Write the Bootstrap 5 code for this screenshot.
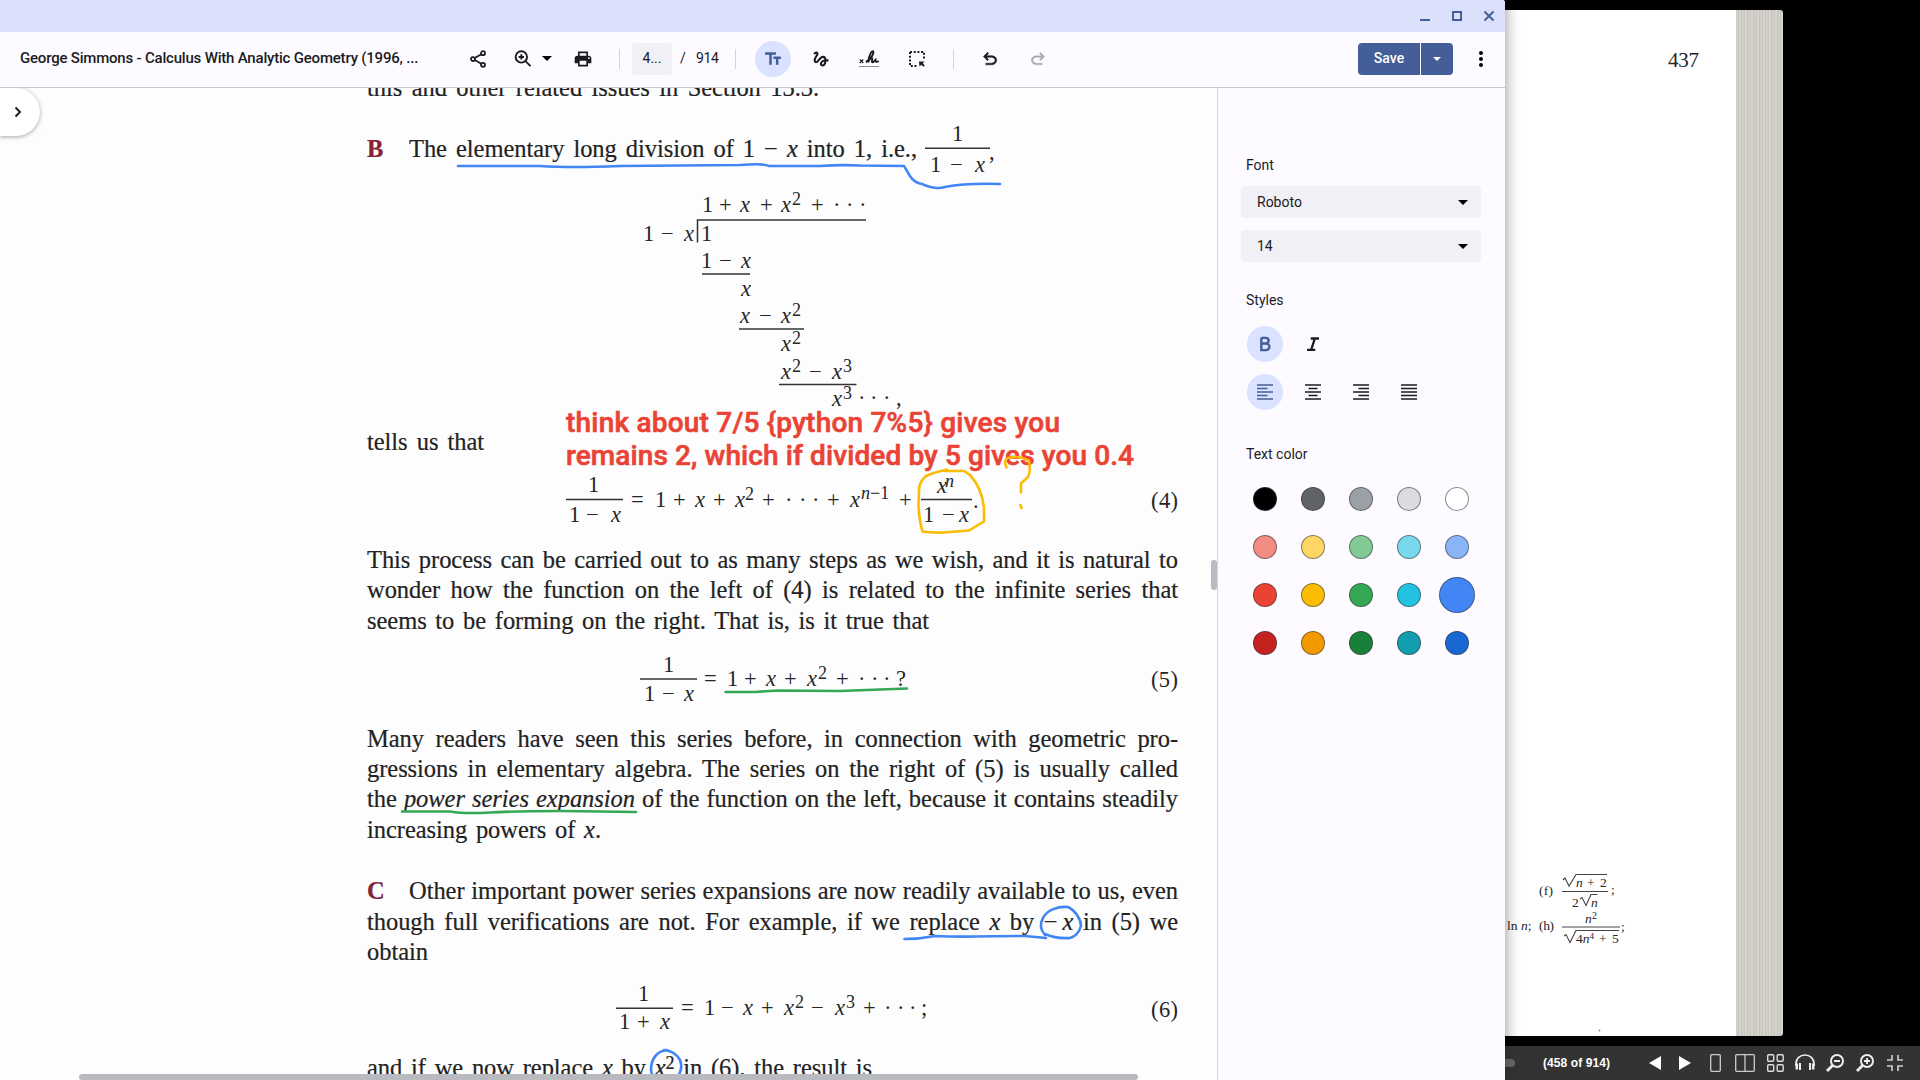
<!DOCTYPE html>
<html lang="en">
<head>
<meta charset="utf-8">
<title>George Simmons - Calculus With Analytic Geometry</title>
<link href="https://cdn.jsdelivr.net/npm/bootstrap@5.3.0/dist/css/bootstrap.min.css" rel="stylesheet">
<style>
body{width:1920px;height:1080px;overflow:hidden;background:#000;font-family:Roboto,"Liberation Sans",sans-serif;color:#1b1b1f}
svg{display:block;flex:none;overflow:visible}
.app-window{width:1505px;height:1080px;background:#fdfbff;box-shadow:0 0 12px rgba(0,0,0,.32);z-index:2;border-top-right-radius:3px}
.title-strip{height:32px;background:#dce1fb;color:#445e99;border-top-right-radius:3px;padding-right:11px;gap:22px}
.tool-strip{height:56px;border-bottom:1px solid #c9c9d0;padding-bottom:2px}
.doc-name{width:418px;padding-left:20px;font-size:15px;font-weight:500;letter-spacing:-.2px;white-space:nowrap}
.tool{width:36px;height:36px;border-radius:50%;display:flex;align-items:center;justify-content:center;flex:none}
.tool.on{background:#d9e2ff;color:#445e99}
.rule-v{width:1px;height:20px;background:#d3d3d9;flex:none}
.page-box{width:40px;height:32px;border-radius:4px;background:#f0f0f6;font-size:14px}
.save-btn{height:32px;background:#445e99;color:#fff;font-size:14px;font-weight:500;border-radius:4px 0 0 4px;width:62px}
.save-more{height:32px;width:32px;margin-left:1px;background:#445e99;color:#fff;border-radius:0 4px 4px 0}
.viewer{width:1217px;height:992px;background:#fdfdfd;overflow:hidden}
.sheet{margin-left:367px;width:811px;margin-top:-15.3px;font-family:"Liberation Serif",serif;color:#222;font-size:24.5px}
.sheet svg,.overlay-ink,.book-math{font-family:"Liberation Serif",serif;fill:#262626}
.ln{height:30.33px;line-height:30.33px;white-space:nowrap;text-align:justify;text-align-last:justify;letter-spacing:-.05px;word-spacing:-4px;-webkit-text-stroke:.2px #222}
.mark-letter{display:inline-block;width:42px;color:#8c2036;font-weight:700;text-align-last:left}
.math{font-size:22.5px}
.math i,.math .v{font-style:italic}
.math .s{font-size:18px}
.r{stroke:#333;stroke-width:1.5;fill:none}
.overlay-ink{position:absolute;left:0;top:0;pointer-events:none}
.overlay-ink path{fill:none;stroke-width:2.6;stroke-linecap:round;stroke-linejoin:round}
.note{font-family:Roboto,sans-serif;font-weight:500;font-size:28px;fill:#ea4335;stroke:#ea4335;stroke-width:.6}
.expander{position:absolute;left:0;top:0;width:40px;height:48px;border-radius:0 24px 24px 0;background:#fff;box-shadow:0 1px 4px rgba(0,0,0,.35)}
.thumb-h{position:absolute;left:79px;top:986px;width:1059px;height:6px;border-radius:3px;background:#b9b9c0}
.thumb-v{position:absolute;left:1211px;top:472px;width:6px;height:30px;border-radius:3px;background:#bbbbc3}
.side{width:288px;border-left:1px solid #d5d5db;padding:67px 23px 0;font-size:14px}
.lab{height:20px;line-height:20px;padding-left:5px}
.pick{height:32px;width:240px;background:#f0f0f6;border-radius:4px;padding:0 13px 0 16px}
.tools{gap:12px;padding-left:6px}
.swatches{display:grid;grid-template-columns:repeat(5,36px);grid-auto-rows:36px;gap:12px;padding-left:6px;place-items:center}
.sw{width:24px;height:24px;border-radius:50%;border:1px solid rgba(60,64,67,.6);background:var(--c)}
.sw.big{width:36px;height:36px}
.backdrop{width:415px;background:#000}
.book{height:1026px;margin-top:10px}
.leaf{width:231px;background:linear-gradient(90deg,#ececec,#fff 16px)}
.leaf-edges{width:47px;border-radius:0 3px 3px 0;background:repeating-linear-gradient(90deg,#d2cfca 0 2px,#c9c6c0 2px 3px,#d8d5d0 3px 5px,#c5c2bc 5px 6px)}
.book-math{font-size:13.5px}
.bar{height:34px;margin-top:10px;background:#333;color:#fff;font:700 12px "Liberation Sans",sans-serif}
.knob{width:10px;height:8px;border-radius:0 4px 4px 0;background:#666}
</style>
<script src="https://cdn.jsdelivr.net/npm/bootstrap@5.3.0/dist/js/bootstrap.bundle.min.js"></script>
</head>
<body class="d-flex">
<main class="app-window d-flex flex-column position-relative flex-shrink-0">
  <header class="title-strip d-flex align-items-center justify-content-end">
    <svg width="10" height="10" stroke="currentColor" stroke-width="2"><path d="M0 9H10"/></svg>
    <svg width="10" height="10" stroke="currentColor" stroke-width="2" fill="none"><path d="M1 1H9V9H1Z"/></svg>
    <svg width="10" height="10" stroke="currentColor" stroke-width="2"><path d="M.5 .5L9.5 9.5M9.5 .5L.5 9.5"/></svg>
  </header>
  <nav class="tool-strip d-flex align-items-center flex-shrink-0">
    <div class="doc-name">George Simmons - Calculus With Analytic Geometry (1996, ...</div>
    <div class="tool" style="margin-left:42px"><svg width="20" height="20" viewBox="0 0 24 24" fill="none" stroke="currentColor" stroke-width="2.1"><circle cx="18" cy="5" r="2.4"/><circle cx="6" cy="12" r="2.4"/><circle cx="18" cy="19" r="2.4"/><path d="M8 10.8L16 6.2M8 13.2L16 17.8"/></svg></div>
    <div class="tool" style="margin-left:9px"><svg width="20" height="20" viewBox="0 0 24 24" fill="none" stroke="currentColor" stroke-width="2.3"><circle cx="10" cy="9.5" r="6.8"/><path d="M15 14.5L21 20.5M10 6.3V12.7M6.8 9.500H13.200"/></svg></div>
    <svg style="margin-left:1px" width="10" height="5"><path d="M0 0H10L5 5Z"/></svg>
    <div class="tool" style="margin-left:13px"><svg width="20" height="20" viewBox="0 0 24 24" fill="currentColor"><path fill-rule="evenodd" d="M19 8H5c-1.7 0-3 1.3-3 3v6h4v4h12v-4h4v-6c0-1.700-1.300-3-3-3zm-3 11H8v-5h8v5zm3-7a1 1 0 1 1 0-2 1 1 0 0 1 0 2zM6 3h12v5H6zM8 5v3h8V5z"/></svg></div>
    <div class="rule-v" style="margin-left:18px"></div>
    <div class="page-box d-flex align-items-center justify-content-center" style="margin-left:12px">4...</div>
    <div style="margin-left:8px;width:12px;font-size:14px">/</div>
    <div style="margin-left:4px;width:24px;font-size:14px;letter-spacing:-.4px">914</div>
    <div class="rule-v" style="margin-left:15px"></div>
    <div class="tool on" style="margin-left:19px"><svg width="20" height="20" viewBox="0 0 24 24" fill="currentColor"><path d="M2.500 4v3h5v12h3V7h5V4h-13zm19 5h-9v3h3v7h3v-7h3V9z"/></svg></div>
    <div class="tool" style="margin-left:12px"><svg width="20" height="20" viewBox="0 0 24 24" fill="currentColor"><path d="M4.590 6.890c.7-.71 1.400-1.350 1.710-1.220.5.2 0 1.030-.3 1.520-.25.42-2.860 3.890-2.860 6.310 0 1.280.48 2.340 1.340 2.980.75.56 1.740.73 2.640.46 1.070-.31 1.950-1.400 3.060-2.770 1.210-1.490 2.830-3.440 4.080-3.440 1.630 0 1.650 1.010 1.760 1.790-3.780.64-5.380 3.670-5.380 5.370 0 1.700 1.440 3.090 3.210 3.090 1.630 0 4.290-1.330 4.690-6.100H21v-2.500h-2.470c-.15-1.650-1.090-4.200-4.030-4.200-2.250 0-4.180 1.910-4.940 2.840-.58.73-2.060 2.480-2.290 2.720-.25.3-.68.84-1.110.84-.45 0-.72-.83-.36-1.920.35-1.090 1.400-2.860 1.850-3.520.78-1.140 1.300-1.920 1.300-3.280C8.950 3.690 7.310 3 6.440 3 5.120 3 3.970 4 3.720 4.250c-.36.36-.66.66-.88.93l1.750 1.710zm9.290 11.660c-.31 0-.74-.26-.74-.72 0-.6.73-2.200 2.870-2.760-.3 2.690-1.430 3.480-2.130 3.480z"/></svg></div>
    <div class="tool" style="margin-left:12px"><svg width="20" height="20" fill="none" stroke="currentColor"><path d="M.8 10.500l3.500 3.500M4.300 10.500L.8 14" stroke-width="1.100"/><path d="M6.800 13C10.500 11.500 15 5.500 14.300 2.700C13.400.8 9.800 5.500 9.200 13.300C10.500 9.500 13 8.300 13.300 9.600C13.600 11 12 13 13.500 13.200C15 13.300 15.600 11.500 16.500 10.800C16.300 13 17.500 13.500 19.700 12" stroke-width="1.900"/><path d="M.5 17.500H20" stroke-dasharray="1 1" stroke-width="1.200"/></svg></div>
    <div class="tool" style="margin-left:12px"><svg width="16" height="16" fill="none" stroke="currentColor"><path d="M1 1H15V9M1 1V15H8" stroke-width="2" stroke-dasharray="2 1.700"/><path d="M10 10.500H15.500L13.800 12.200L15.700 14.400L14.400 15.700L12.300 13.700L10.500 15.500Z" fill="currentColor" stroke="none"/></svg></div>
    <div class="rule-v" style="margin-left:18px"></div>
    <div class="tool" style="margin-left:18px"><svg width="20" height="20" viewBox="0 -960 960 960" fill="currentColor" stroke="currentColor" stroke-width="24"><path d="M280-200v-80h284q63 0 109.500-40T720-420q0-60-46.500-100T564-560H312l104 104-56 56-200-200 200-200 56 56-104 104h252q97 0 169.500 63T800-420q0 94-72.500 157T564-200H280Z"/></svg></div>
    <div class="tool" style="margin-left:12px;color:#a9a9ad"><svg width="20" height="20" viewBox="0 -960 960 960" fill="currentColor" stroke="currentColor" stroke-width="14"><path transform="matrix(-1 0 0 1 960 0)" d="M280-200v-80h284q63 0 109.500-40T720-420q0-60-46.500-100T564-560H312l104 104-56 56-200-200 200-200 56 56-104 104h252q97 0 169.500 63T800-420q0 94-72.500 157T564-200H280Z"/></svg></div>
    <div class="ms-auto save-btn d-flex align-items-center justify-content-center">Save</div>
    <div class="save-more d-flex align-items-center justify-content-center"><svg width="8" height="4" fill="#fff"><path d="M0 0H8L4 4Z"/></svg></div>
    <div class="tool" style="margin:0 6px 0 10px"><svg width="4" height="16"><circle cx="2" cy="2" r="2"/><circle cx="2" cy="8" r="2"/><circle cx="2" cy="14" r="2"/></svg></div>
  </nav>
  <div class="d-flex flex-grow-1">
    <section class="viewer position-relative flex-shrink-0">
      <article class="sheet">
        <div class="ln" style="width:452px">this and other related issues in Section 13.3.</div>
        <div class="d-flex" style="margin-top:31.200px">
          <div class="ln" style="width:550px"><span class="mark-letter">B</span>The elementary long division of 1 − <i>x</i> into 1, i.e.,</div>
          <svg class="math" style="margin-left:8px" width="70" height="30" viewBox="925 134.200 70 30"><text x="952" y="141">1</text><path class="r" d="M925 148.500H990"/><text y="172.500"><tspan x="930">1</tspan><tspan x="950">−</tspan><tspan class="v" x="975">x</tspan></text><text x="989" y="159">,</text></svg>
        </div>
        <svg class="math" width="811" height="262.200" viewBox="367 164.500 811 262.200">
          <text y="212"><tspan x="702">1</tspan><tspan x="719">+</tspan><tspan class="v" x="740">x</tspan><tspan x="760">+</tspan><tspan class="v" x="781">x</tspan><tspan class="s" x="792" dy="-7">2</tspan><tspan x="811" dy="7">+</tspan><tspan x="833">·</tspan><tspan x="846">·</tspan><tspan x="859">·</tspan></text>
          <path class="r" d="M697.500 242V219.500H866"/>
          <text y="240.500"><tspan x="643">1</tspan><tspan x="661">−</tspan><tspan class="v" x="684">x</tspan><tspan x="701">1</tspan></text>
          <text y="267.500"><tspan x="701">1</tspan><tspan x="719">−</tspan><tspan class="v" x="741">x</tspan></text>
          <path class="r" d="M702 273.500H750"/>
          <text y="295.500" x="741" class="v">x</text>
          <text y="323"><tspan class="v" x="740">x</tspan><tspan x="759">−</tspan><tspan class="v" x="781">x</tspan><tspan class="s" x="792" dy="-7">2</tspan></text>
          <path class="r" d="M739 328.500H804"/>
          <text y="351"><tspan class="v" x="781">x</tspan><tspan class="s" x="792" dy="-7">2</tspan></text>
          <text y="378.500"><tspan class="v" x="781">x</tspan><tspan class="s" x="792" dy="-7">2</tspan><tspan x="809" dy="7">−</tspan><tspan class="v" x="832">x</tspan><tspan class="s" x="843" dy="-7">3</tspan></text>
          <path class="r" d="M779 384H856.500"/>
          <text y="405.500"><tspan class="v" x="832">x</tspan><tspan class="s" x="843" dy="-7">3</tspan><tspan x="858" dy="6">·</tspan><tspan x="870">·</tspan><tspan x="883">·</tspan><tspan x="896">,</tspan></text>
        </svg>
        <div class="ln" style="width:117px">tells us that</div>
        <svg class="math" width="811" height="88" viewBox="367 457 811 88">
          <text x="588" y="491.500">1</text><path class="r" d="M566 499.500H623"/>
          <text y="522"><tspan x="569">1</tspan><tspan x="586">−</tspan><tspan class="v" x="611">x</tspan></text>
          <text y="506.500"><tspan x="631">=</tspan><tspan x="655">1</tspan><tspan x="673">+</tspan><tspan class="v" x="695">x</tspan><tspan x="713">+</tspan><tspan class="v" x="735">x</tspan><tspan class="s" x="745" dy="-7">2</tspan><tspan x="762" dy="7">+</tspan><tspan x="785">·</tspan><tspan x="799">·</tspan><tspan x="812">·</tspan><tspan x="827">+</tspan><tspan class="v" x="850">x</tspan><tspan class="s v" x="861" dy="-8">n</tspan><tspan class="s">−1</tspan><tspan x="899" dy="8">+</tspan></text>
          <text y="492.500"><tspan class="v" x="937">x</tspan><tspan class="s v" x="945" dy="-6">n</tspan></text><path class="r" d="M921 499.500H972"/>
          <text y="522"><tspan x="923">1</tspan><tspan x="942">−</tspan><tspan class="v" x="959">x</tspan><tspan x="973" dy="-14">.</tspan></text>
          <text x="1151" y="508" textLength="27">(4)</text>
        </svg>
        <div class="ln">This process can be carried out to as many steps as we wish, and it is natural to</div>
        <div class="ln">wonder how the function on the left of (4) is related to the infinite series that</div>
        <div class="ln" style="width:562px">seems to be forming on the right. That is, is it true that</div>
        <svg class="math" width="811" height="87.700" viewBox="367 636 811 87.700">
          <text x="663" y="672.500">1</text><path class="r" d="M640 679H697"/>
          <text y="701"><tspan x="644">1</tspan><tspan x="662">−</tspan><tspan class="v" x="684">x</tspan></text>
          <text y="686"><tspan x="704">=</tspan><tspan x="727">1</tspan><tspan x="744">+</tspan><tspan class="v" x="766">x</tspan><tspan x="784">+</tspan><tspan class="v" x="807">x</tspan><tspan class="s" x="818" dy="-7">2</tspan><tspan x="836" dy="7">+</tspan><tspan x="858">·</tspan><tspan x="871">·</tspan><tspan x="883">·</tspan><tspan x="896">?</tspan></text>
          <text x="1151" y="687.500" textLength="27">(5)</text>
        </svg>
        <div class="ln">Many readers have seen this series before, in connection with geometric pro-</div>
        <div class="ln">gressions in elementary algebra. The series on the right of (5) is usually called</div>
        <div class="ln">the <i>power series expansion</i> of the function on the left, because it contains steadily</div>
        <div class="ln" style="width:234px">increasing powers of <i>x</i>.</div>
        <div class="ln" style="margin-top:31.200px"><span class="mark-letter">C</span>Other important power series expansions are now readily available to us, even</div>
        <div class="ln">though full verifications are not. For example, if we replace <i>x</i> by <span style="letter-spacing:5px">−</span><i>x</i> in (5) we</div>
        <div class="ln" style="width:62px">obtain</div>
        <svg class="math" width="811" height="86" viewBox="367 967.700 811 86">
          <text x="638" y="1001.500">1</text><path class="r" d="M616 1009H673"/>
          <text y="1029.500"><tspan x="619">1</tspan><tspan x="637">+</tspan><tspan class="v" x="660">x</tspan></text>
          <text y="1016"><tspan x="681">=</tspan><tspan x="704">1</tspan><tspan x="721">−</tspan><tspan class="v" x="743">x</tspan><tspan x="761">+</tspan><tspan class="v" x="784">x</tspan><tspan class="s" x="795" dy="-7">2</tspan><tspan x="811" dy="7">−</tspan><tspan class="v" x="835">x</tspan><tspan class="s" x="846" dy="-7">3</tspan><tspan x="863" dy="7">+</tspan><tspan x="884">·</tspan><tspan x="897">·</tspan><tspan x="909">·</tspan><tspan x="921">;</tspan></text>
          <text x="1151" y="1017.500" textLength="27">(6)</text>
        </svg>
        <div class="ln" style="width:505px">and if we now replace <i>x</i> by <i>x</i><span style="font-size:18px;position:relative;top:-7px">2</span> in (6), the result is</div>
      </article>
      <svg class="overlay-ink" width="1217" height="992" viewBox="0 88 1217 992">
        <text class="note" x="566" y="432" textLength="494">think about 7/5 {python 7%5} gives you</text>
        <text class="note" x="566" y="465" textLength="568">remains 2, which if divided by 5 gives you 0.4</text>
        <g stroke="#4285f4">
          <path d="M458 166H540Q570 168 620 166L740 165Q764 163 769 166H820Q840 164.500 860 165.500L904 166C908 171 910 182 922 184Q935 190 945 187Q965 183 1000 184"/>
          <path d="M904.500 939Q920 939 935 936Q955 937 975 936.500T1025 936L1046 938"/>
          <path d="M1045 935Q1038 927 1043 918C1047 910 1058 906 1068 907C1076 911 1081 920 1081 926Q1078 936 1070 938Q1056 939 1045 934"/>
          <path d="M667 1050C656 1051 651 1060 651 1070Q652 1079 658 1083M675 1080Q684 1070 680 1060Q675 1051 664 1050"/>
        </g>
        <g stroke="#34a853">
          <path d="M725.500 692H755L778 690.500L840 691L880 689.500L907 688.500"/>
          <path d="M402 811.500H450Q465 814 490 812.500T560 811L600 811.500L636 812"/>
        </g>
        <g stroke="#fbbc04">
          <path d="M947 469.500Q932 473 926 476Q919 482 919 490L918.500 505Q919 520 922.500 531.500Q935 533.500 950 532L969 530.500L984 521.500V508Q982 488 970 475L964 471L945 471"/>
          <path d="M1006.500 467.500Q1003 461 1008 458Q1020 455 1029 461Q1031 471 1028 477L1021 483.500V492.500M1020.500 505L1021.500 508"/>
        </g>
      </svg>
      <div class="thumb-h"></div>
      <div class="thumb-v"></div>
      <div class="expander"><svg width="40" height="48" fill="none" stroke="#1b1b1f" stroke-width="1.900"><path d="M15.500 19.500L20 24L15.500 28.500"/></svg></div>
    </section>
    <aside class="side flex-shrink-0">
      <div class="lab">Font</div>
      <div class="pick d-flex align-items-center justify-content-between" style="margin-top:11px">Roboto<svg width="10" height="5"><path d="M0 0H10L5 5Z"/></svg></div>
      <div class="pick d-flex align-items-center justify-content-between" style="margin-top:12px">14<svg width="10" height="5"><path d="M0 0H10L5 5Z"/></svg></div>
      <div class="lab" style="margin-top:28px">Styles</div>
      <div class="tools d-flex" style="margin-top:16px">
        <div class="tool on"><svg width="22" height="22" viewBox="0 0 24 24" fill="none" stroke="currentColor" stroke-width="2.600"><path d="M8 5.300V18.700H13.200A3.600 3.600 0 0 0 13.200 11.500H8M12.800 11.500A3.100 3.100 0 0 0 12.800 5.300H8"/></svg></div>
        <div class="tool"><svg width="22" height="22" viewBox="0 0 24 24" fill="none" stroke="currentColor" stroke-width="2.500"><path d="M9.500 6H18.500M5.500 18.500H14.500M14 6L10 18.500" /></svg></div>
      </div>
      <div class="tools d-flex" style="margin-top:12px">
        <div class="tool on"><svg width="16" height="16" stroke="currentColor" stroke-width="1.400"><path d="M0 1H16M0 4.500H10.500M0 8H16M0 11.500H10.500M0 15H16"/></svg></div>
        <div class="tool"><svg width="16" height="16" stroke="currentColor" stroke-width="1.700"><path d="M0 1H16M3.500 4.500H12.500M0 8H16M3.500 11.500H12.500M0 15H16"/></svg></div>
        <div class="tool"><svg width="16" height="16" stroke="currentColor" stroke-width="1.700"><path d="M0 1H16M5.500 4.500H16M0 8H16M5.500 11.500H16M0 15H16"/></svg></div>
        <div class="tool"><svg width="16" height="16" stroke="currentColor" stroke-width="1.700"><path d="M0 1H16M0 4.500H16M0 8H16M0 11.500H16M0 15H16"/></svg></div>
      </div>
      <div class="lab" style="margin-top:34px">Text color</div>
      <div class="swatches" style="margin-top:17px">
        <div class="sw" style="--c:#000"></div><div class="sw" style="--c:#5f6368"></div><div class="sw" style="--c:#9aa0a6"></div><div class="sw" style="--c:#dadce0"></div><div class="sw" style="--c:#fff"></div>
        <div class="sw" style="--c:#f28b82"></div><div class="sw" style="--c:#fdd663"></div><div class="sw" style="--c:#81c995"></div><div class="sw" style="--c:#78d9ec"></div><div class="sw" style="--c:#8ab4f8"></div>
        <div class="sw" style="--c:#ea4335"></div><div class="sw" style="--c:#fbbc04"></div><div class="sw" style="--c:#34a853"></div><div class="sw" style="--c:#24c1e0"></div><div class="sw big" style="--c:#4285f4"></div>
        <div class="sw" style="--c:#c5221f"></div><div class="sw" style="--c:#f29900"></div><div class="sw" style="--c:#188038"></div><div class="sw" style="--c:#129eaf"></div><div class="sw" style="--c:#1967d2"></div>
      </div>
    </aside>
  </div>
</main>
<section class="backdrop flex-shrink-0">
  <div class="book d-flex">
    <div class="leaf">
      <svg class="book-math" width="231" height="1026" viewBox="1505 10 231 1026">
        <text x="1668" y="67" font-size="21" textLength="31">437</text>
        <text x="1539" y="895" textLength="14">(f)</text>
        <path d="M1563 880l2-2 4 8 7-11.500H1607M1562 891.500H1608M1580 899l2-1.500 4 8 5-11H1597.500" fill="none" stroke="#444" stroke-width="1.100"/>
        <text y="887"><tspan x="1576" font-style="italic">n</tspan><tspan x="1587">+</tspan><tspan x="1600">2</tspan></text>
        <text y="907"><tspan x="1572">2</tspan><tspan x="1591" font-style="italic">n</tspan></text>
        <text x="1611" y="894">;</text>
        <text x="1507" y="930">ln <tspan font-style="italic">n</tspan>;</text>
        <text x="1539" y="930" textLength="15">(h)</text>
        <text y="923"><tspan x="1585" font-style="italic">n</tspan><tspan x="1592" dy="-4" font-size="10">2</tspan></text>
        <path d="M1562 927H1620M1564 936l2-1.500 4 8 6-12H1619" fill="none" stroke="#444" stroke-width="1.100"/>
        <text y="943"><tspan x="1576">4</tspan><tspan font-style="italic">n</tspan><tspan dy="-4" font-size="9">4</tspan><tspan x="1599" dy="4">+</tspan><tspan x="1612">5</tspan></text>
        <text x="1621" y="931">;</text>
        <circle cx="1599.500" cy="1030.500" r=".9" fill="#888"/>
      </svg>
    </div>
    <div class="leaf-edges"></div>
  </div>
  <footer class="bar d-flex align-items-center">
    <div class="knob"></div>
    <div style="margin-left:28px;width:96px;letter-spacing:.08px">(458 of 914)</div>
    <svg style="margin-left:10px" width="12" height="14" fill="#fff"><path d="M12 0V14L0 7Z"/></svg>
    <svg style="margin-left:18px" width="12" height="14" fill="#fff"><path d="M0 0V14L12 7Z"/></svg>
    <svg style="margin-left:19px" width="11" height="18" fill="none" stroke="#ccc" stroke-width="1.300"><rect x=".7" y=".7" width="9.600" height="16.600" rx="1"/></svg>
    <svg style="margin-left:14px" width="20" height="18" fill="none" stroke="#ccc" stroke-width="1.300"><rect x=".7" y=".7" width="18.600" height="16.600" rx="1"/><path d="M10 1V17"/></svg>
    <svg style="margin-left:12px" width="17" height="18" fill="none" stroke="#ddd" stroke-width="1.400"><rect x=".7" y=".7" width="6" height="6.500" rx="1"/><rect x="10.200" y=".7" width="6" height="6.500" rx="1"/><rect x=".7" y="10.800" width="6" height="6.500" rx="1"/><rect x="10.200" y="10.800" width="6" height="6.500" rx="1"/></svg>
    <svg style="margin-left:11px" width="20" height="18" fill="none" stroke="#eee"><path d="M1 12V9.500A9 8.500 0 0 1 19 9.500V12" stroke-width="1.700"/><path d="M1.800 9.500V15.500M18.200 9.500V15.500" stroke-width="2.500"/><path d="M5 9V16M15 9V16" stroke-width="2"/></svg>
    <svg style="margin-left:11px" width="18" height="18" fill="none" stroke="#eee"><circle cx="11" cy="7" r="6" stroke-width="2"/><path d="M6.500 11.500L1 17" stroke-width="2.800"/><path d="M8 7H14" stroke-width="2"/></svg>
    <svg style="margin-left:12px" width="18" height="18" fill="none" stroke="#eee"><circle cx="11" cy="7" r="6" stroke-width="2"/><path d="M6.500 11.500L1 17" stroke-width="2.800"/><path d="M8 7H14M11 4V10" stroke-width="1.800"/></svg>
    <svg style="margin-left:13px" width="16" height="16" fill="none" stroke="#ccc" stroke-width="1.700"><path d="M0 5H5V0M11 0V5H16M0 11H5V16M11 16V11H16"/></svg>
  </footer>
</section>
</body>
</html>
